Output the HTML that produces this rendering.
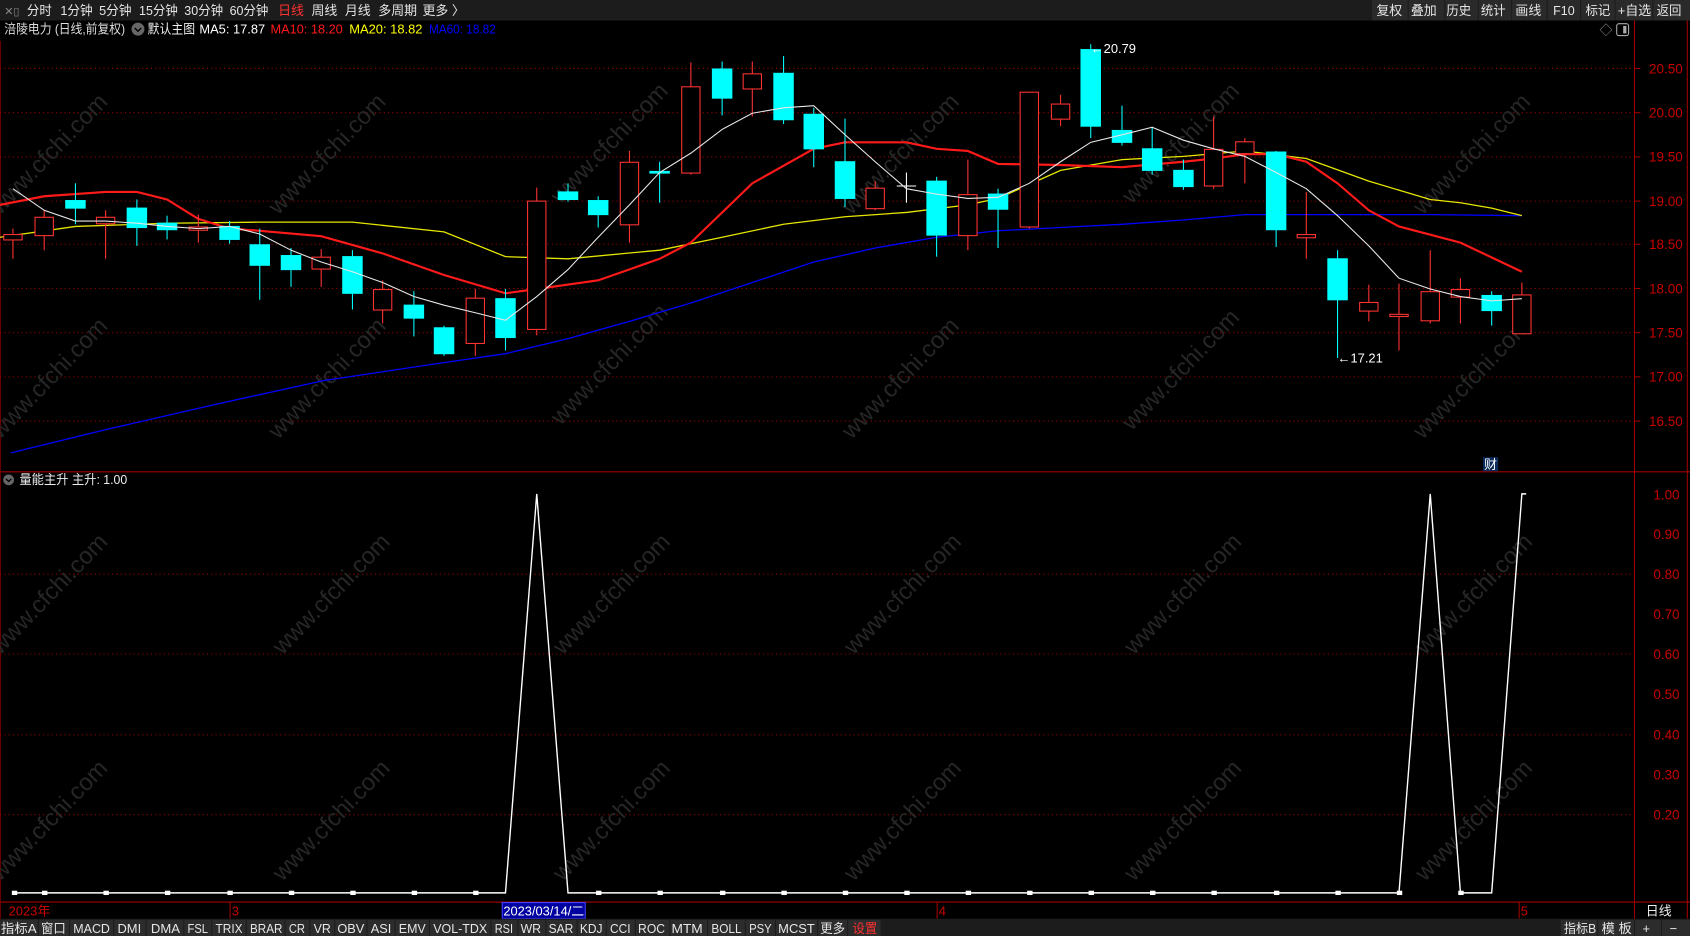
<!DOCTYPE html>
<html><head><meta charset="utf-8"><style>
html,body{margin:0;padding:0;background:#000;overflow:hidden}
svg{display:block}
text{font-family:"Liberation Sans","Noto Sans CJK SC",sans-serif}
</style></head><body>
<svg width="1690" height="936" viewBox="0 0 1568 868" preserveAspectRatio="none" xmlns="http://www.w3.org/2000/svg">
<rect width="1568" height="868" fill="#000"/>
<!-- top toolbar -->
<rect x="0" y="0" width="1568" height="19" fill="#1c1c1c"/>
<g font-size="12" fill="#e6e6e6" lengthAdjust="spacingAndGlyphs">
<text x="4" y="14" fill="#888" font-size="10">✕▯</text>
<text x="25" y="14" textLength="23" lengthAdjust="spacingAndGlyphs">分时</text><text x="56" y="14" textLength="30" lengthAdjust="spacingAndGlyphs">1分钟</text><text x="92" y="14" textLength="30" lengthAdjust="spacingAndGlyphs">5分钟</text><text x="129" y="14" textLength="36" lengthAdjust="spacingAndGlyphs">15分钟</text><text x="171" y="14" textLength="36" lengthAdjust="spacingAndGlyphs">30分钟</text><text x="213" y="14" textLength="36" lengthAdjust="spacingAndGlyphs">60分钟</text>
<text x="258" y="14" fill="#ff3030">日线</text><text x="289" y="14">周线</text><text x="320" y="14">月线</text><text x="351" y="14">多周期</text><text x="392" y="14">更多 〉</text>
</g>
<g fill="#2a2a2a"><rect x="1273" y="0" width="33" height="19"/><rect x="1307" y="0" width="33" height="19"/><rect x="1341" y="0" width="30" height="19"/><rect x="1372" y="0" width="30" height="19"/><rect x="1403" y="0" width="32" height="19"/><rect x="1436" y="0" width="30" height="19"/><rect x="1467" y="0" width="31" height="19"/><rect x="1499" y="0" width="34" height="19"/><rect x="1534" y="0" width="34" height="19"/></g>
<g font-size="12" fill="#e6e6e6">
<text x="1277" y="14" textLength="24" lengthAdjust="spacingAndGlyphs">复权</text>
<text x="1309" y="14" textLength="24" lengthAdjust="spacingAndGlyphs">叠加</text>
<text x="1342" y="14" textLength="23" lengthAdjust="spacingAndGlyphs">历史</text>
<text x="1374" y="14" textLength="23" lengthAdjust="spacingAndGlyphs">统计</text>
<text x="1406" y="14" textLength="24" lengthAdjust="spacingAndGlyphs">画线</text>
<text x="1441" y="14" textLength="20" lengthAdjust="spacingAndGlyphs">F10</text>
<text x="1471" y="14" textLength="23" lengthAdjust="spacingAndGlyphs">标记</text>
<text x="1501" y="14" textLength="31" lengthAdjust="spacingAndGlyphs">+自选</text>
<text x="1537" y="14" textLength="23" lengthAdjust="spacingAndGlyphs">返回</text>
</g>
<!-- title row -->
<g font-size="12">
<text x="4" y="31" fill="#ddd" textLength="112" lengthAdjust="spacingAndGlyphs">涪陵电力 (日线,前复权)</text>
<circle cx="128" cy="27" r="6" fill="#666"/><path d="M125 26 L128 29 L131 26" fill="none" stroke="#000" stroke-width="1.3"/>
<text x="137" y="31" fill="#eee" textLength="44" lengthAdjust="spacingAndGlyphs">默认主图</text>
<text x="185" y="31" fill="#fff" textLength="61" lengthAdjust="spacingAndGlyphs">MA5: 17.87</text>
<text x="251" y="31" fill="#ff1a1a" textLength="67" lengthAdjust="spacingAndGlyphs">MA10: 18.20</text>
<text x="324" y="31" fill="#ffff00" textLength="68" lengthAdjust="spacingAndGlyphs">MA20: 18.82</text>
<text x="398" y="31" fill="#0000ff" textLength="62" lengthAdjust="spacingAndGlyphs">MA60: 18.82</text>
<text x="1484" y="32" fill="#888">◇</text>
<rect x="1500" y="22" width="11" height="11" rx="2" fill="none" stroke="#aaa"/><rect x="1506" y="24" width="3" height="7" fill="#aaa"/>
</g>
<!-- frames -->
<line x1="1516.5" y1="19" x2="1516.5" y2="868" stroke="#a00000"/>
<line x1="1565.5" y1="19" x2="1565.5" y2="852" stroke="#a00000"/>
<line x1="0" y1="437.5" x2="1568" y2="437.5" stroke="#a00000"/>
<line x1="0" y1="836.5" x2="1568" y2="836.5" stroke="#a00000"/>
<line x1="0.5" y1="38" x2="0.5" y2="852" stroke="#600"/>
<!-- price grid -->
<g stroke="#a00000" stroke-dasharray="1,3">
<line x1="0" y1="63.5" x2="1516" y2="63.5"/><line x1="0" y1="104.5" x2="1516" y2="104.5"/><line x1="0" y1="145.5" x2="1516" y2="145.5"/><line x1="0" y1="186.5" x2="1516" y2="186.5"/><line x1="0" y1="226.5" x2="1516" y2="226.5"/><line x1="0" y1="267.5" x2="1516" y2="267.5"/><line x1="0" y1="308.5" x2="1516" y2="308.5"/><line x1="0" y1="349.5" x2="1516" y2="349.5"/><line x1="0" y1="390.5" x2="1516" y2="390.5"/>
<line x1="0" y1="532.5" x2="1516" y2="532.5"/><line x1="0" y1="606.5" x2="1516" y2="606.5"/><line x1="0" y1="681.5" x2="1516" y2="681.5"/><line x1="0" y1="755.5" x2="1516" y2="755.5"/>
</g>
<g fill="#c80000" font-size="12.5">
<text x="1530" y="68">20.50</text><text x="1530" y="109">20.00</text><text x="1530" y="150">19.50</text><text x="1530" y="191">19.00</text><text x="1530" y="231">18.50</text><text x="1530" y="272">18.00</text><text x="1530" y="313">17.50</text><text x="1530" y="354">17.00</text><text x="1530" y="395">16.50</text>
<text x="1534" y="463">1.00</text><text x="1534" y="500">0.90</text><text x="1534" y="537">0.80</text><text x="1534" y="574">0.70</text><text x="1534" y="611">0.60</text><text x="1534" y="648">0.50</text><text x="1534" y="686">0.40</text><text x="1534" y="723">0.30</text><text x="1534" y="760">0.20</text>
</g>
<g stroke="#a00000"><line x1="1516" y1="63.5" x2="1522" y2="63.5"/><line x1="1516" y1="104.5" x2="1522" y2="104.5"/><line x1="1516" y1="145.5" x2="1522" y2="145.5"/><line x1="1516" y1="186.5" x2="1522" y2="186.5"/><line x1="1516" y1="226.5" x2="1522" y2="226.5"/><line x1="1516" y1="267.5" x2="1522" y2="267.5"/><line x1="1516" y1="308.5" x2="1522" y2="308.5"/><line x1="1516" y1="349.5" x2="1522" y2="349.5"/><line x1="1516" y1="390.5" x2="1522" y2="390.5"/></g>
<!-- watermarks -->
<g fill="#262626" font-size="22" font-family="Liberation Sans,sans-serif">
<text transform="translate(0,200) rotate(-46)">www.cfchi.com</text>
<text transform="translate(258,200) rotate(-46)">www.cfchi.com</text>
<text transform="translate(0,408) rotate(-46)">www.cfchi.com</text>
<text transform="translate(258,408) rotate(-46)">www.cfchi.com</text>
<text transform="translate(520,395) rotate(-46)">www.cfchi.com</text>
<text transform="translate(790,408) rotate(-46)">www.cfchi.com</text>
<text transform="translate(1050,400) rotate(-46)">www.cfchi.com</text>
<text transform="translate(1320,408) rotate(-46)">www.cfchi.com</text>
<text transform="translate(520,190) rotate(-46)">www.cfchi.com</text>
<text transform="translate(790,200) rotate(-46)">www.cfchi.com</text>
<text transform="translate(1050,190) rotate(-46)">www.cfchi.com</text>
<text transform="translate(1320,200) rotate(-46)">www.cfchi.com</text>
<text transform="translate(0,608) rotate(-46)">www.cfchi.com</text>
<text transform="translate(262,608) rotate(-46)">www.cfchi.com</text>
<text transform="translate(522,608) rotate(-46)">www.cfchi.com</text>
<text transform="translate(792,608) rotate(-46)">www.cfchi.com</text>
<text transform="translate(1052,608) rotate(-46)">www.cfchi.com</text>
<text transform="translate(1322,608) rotate(-46)">www.cfchi.com</text>
<text transform="translate(0,818) rotate(-46)">www.cfchi.com</text>
<text transform="translate(262,818) rotate(-46)">www.cfchi.com</text>
<text transform="translate(522,818) rotate(-46)">www.cfchi.com</text>
<text transform="translate(792,818) rotate(-46)">www.cfchi.com</text>
<text transform="translate(1052,818) rotate(-46)">www.cfchi.com</text>
<text transform="translate(1322,818) rotate(-46)">www.cfchi.com</text>
</g>
<!-- MA lines -->
<polyline fill="none" stroke="#0000ff" stroke-width="1.2" points="10,420 100,398 200,375 300,353 400,338 469,328 527,314 584,298 641,281 698,262 755,243 812,230 869,220 926,214 984,211 1041,208 1098,204 1155,199 1212,199 1270,199 1327,199 1412,200"/>
<polyline fill="none" stroke="#e6e600" stroke-width="1.2" points="0,220 70,210 155,207 241,206 327,206 412,215 469,238 527,240 612,232 670,220 727,208 784,201 841,197 898,190 926,184 984,158 1041,148 1098,145 1155,140 1212,147 1270,168 1327,185 1355,188 1384,193 1412,200"/>
<polyline fill="none" stroke="#ff1a1a" stroke-width="2" points="0,190 41,182 98,178 127,178 155,185 184,203 213,212 241,214 298,219 355,235 412,255 469,272 498,268 555,260 612,240 641,225 698,170 755,138 784,132 841,132 869,138 898,140 926,152 984,153 1041,155 1098,150 1126,147 1155,143 1184,143 1212,150 1241,170 1270,195 1298,210 1355,225 1412,252"/>
<!-- candles -->
<g stroke-width="1">
<g stroke="#ff3232" fill="#000">
<line x1="12" y1="212" x2="12" y2="240"/><rect x="3.5" y="217.5" width="17" height="5"/>
<line x1="41" y1="195" x2="41" y2="232"/><rect x="32.5" y="201.5" width="17" height="17"/>
<line x1="98" y1="195" x2="98" y2="240"/><rect x="89.5" y="201.5" width="17" height="6"/>
<line x1="184" y1="199" x2="184" y2="225"/><rect x="175.5" y="210.5" width="17" height="3"/>
<line x1="298" y1="231" x2="298" y2="266"/><rect x="289.5" y="238.5" width="17" height="11"/>
<line x1="355" y1="260" x2="355" y2="300"/><rect x="346.5" y="268.5" width="17" height="19"/>
<line x1="441" y1="268" x2="441" y2="330"/><rect x="432.5" y="276.5" width="17" height="42"/>
<line x1="498" y1="174" x2="498" y2="311"/><rect x="489.5" y="186.5" width="17" height="119"/>
<line x1="584" y1="140" x2="584" y2="225"/><rect x="575.5" y="150.5" width="17" height="58"/>
<line x1="641" y1="58" x2="641" y2="162"/><rect x="632.5" y="80.5" width="17" height="80"/>
<line x1="698" y1="57" x2="698" y2="108"/><rect x="689.5" y="68.5" width="17" height="14"/>
<line x1="812" y1="168" x2="812" y2="195"/><rect x="803.5" y="174.5" width="17" height="19"/>
<line x1="898" y1="148" x2="898" y2="232"/><rect x="889.5" y="180.5" width="17" height="38"/>
<line x1="955" y1="85" x2="955" y2="212"/><rect x="946.5" y="85.5" width="17" height="125"/>
<line x1="984" y1="88" x2="984" y2="117"/><rect x="975.5" y="96.5" width="17" height="14"/>
<line x1="1126" y1="108" x2="1126" y2="175"/><rect x="1117.5" y="138.5" width="17" height="34"/>
<line x1="1155" y1="128" x2="1155" y2="170"/><rect x="1146.5" y="131.5" width="17" height="11"/>
<line x1="1212" y1="178" x2="1212" y2="240"/><rect x="1203.5" y="217.5" width="17" height="3"/>
<line x1="1270" y1="264" x2="1270" y2="298"/><rect x="1261.5" y="280.5" width="17" height="8"/>
<line x1="1298" y1="263" x2="1298" y2="325"/><rect x="1289.5" y="291.5" width="17" height="2"/>
<line x1="1327" y1="232" x2="1327" y2="300"/><rect x="1318.5" y="270.5" width="17" height="27"/>
<line x1="1355" y1="258" x2="1355" y2="300"/><rect x="1346.5" y="268.5" width="17" height="7"/>
<line x1="1412" y1="262" x2="1412" y2="310"/><rect x="1403.5" y="273.5" width="17" height="36"/>
</g>
<g stroke="#00ffff" fill="#00ffff">
<line x1="70" y1="170" x2="70" y2="208"/><rect x="61" y="186" width="18" height="7"/>
<line x1="127" y1="185" x2="127" y2="228"/><rect x="118" y="193" width="18" height="18"/>
<line x1="155" y1="200" x2="155" y2="222"/><rect x="146" y="207" width="18" height="6"/>
<line x1="213" y1="205" x2="213" y2="226"/><rect x="204" y="210" width="18" height="12"/>
<line x1="241" y1="212" x2="241" y2="278"/><rect x="232" y="227" width="18" height="19"/>
<line x1="270" y1="230" x2="270" y2="266"/><rect x="261" y="237" width="18" height="13"/>
<line x1="327" y1="232" x2="327" y2="287"/><rect x="318" y="238" width="18" height="34"/>
<line x1="384" y1="270" x2="384" y2="312"/><rect x="375" y="283" width="18" height="12"/>
<line x1="412" y1="302" x2="412" y2="330"/><rect x="403" y="304" width="18" height="24"/>
<line x1="469" y1="268" x2="469" y2="325"/><rect x="460" y="277" width="18" height="36"/>
<line x1="527" y1="170" x2="527" y2="187"/><rect x="518" y="178" width="18" height="7"/>
<line x1="555" y1="182" x2="555" y2="211"/><rect x="546" y="186" width="18" height="13"/>
<line x1="612" y1="150" x2="612" y2="188"/><rect x="603" y="159" width="18" height="1.5"/>
<line x1="670" y1="57" x2="670" y2="107"/><rect x="661" y="64" width="18" height="27"/>
<line x1="727" y1="52" x2="727" y2="115"/><rect x="718" y="68" width="18" height="43"/>
<line x1="755" y1="100" x2="755" y2="155"/><rect x="746" y="106" width="18" height="32"/>
<line x1="784" y1="110" x2="784" y2="192"/><rect x="775" y="150" width="18" height="34"/>
<line x1="869" y1="164" x2="869" y2="238"/><rect x="860" y="168" width="18" height="50"/>
<line x1="926" y1="175" x2="926" y2="230"/><rect x="917" y="180" width="18" height="14"/>
<line x1="1012" y1="41" x2="1012" y2="128"/><rect x="1003" y="46" width="18" height="71"/>
<line x1="1041" y1="98" x2="1041" y2="135"/><rect x="1032" y="121" width="18" height="11"/>
<line x1="1069" y1="118" x2="1069" y2="162"/><rect x="1060" y="138" width="18" height="20"/>
<line x1="1098" y1="148" x2="1098" y2="176"/><rect x="1089" y="158" width="18" height="15"/>
<line x1="1184" y1="140" x2="1184" y2="229"/><rect x="1175" y="141" width="18" height="72"/>
<line x1="1241" y1="232" x2="1241" y2="332"/><rect x="1232" y="240" width="18" height="38"/>
<line x1="1384" y1="270" x2="1384" y2="302"/><rect x="1375" y="274" width="18" height="14"/>
</g>
<g stroke="#fff"><line x1="841" y1="160" x2="841" y2="188"/><line x1="832" y1="172.5" x2="850" y2="172.5"/></g>
</g>
<polyline fill="none" stroke="#e8e8e8" stroke-width="1" points="12,175 41,195 70,205 98,205 127,207 155,210 184,212 213,210 241,217 270,232 298,243 327,252 355,262 384,275 412,283 441,290 469,297 498,275 527,250 555,220 584,190 612,160 641,142 670,120 698,105 727,100 755,98 784,125 812,150 841,175 869,180 898,184 926,183 955,170 984,150 1012,132 1041,125 1069,118 1098,130 1126,138 1155,145 1184,160 1212,175 1241,200 1270,228 1298,258 1327,268 1355,275 1384,279 1412,277"/>
<g fill="#fff" font-size="12"><text x="1012" y="49">←20.79</text><text x="1241" y="336">←17.21</text></g>
<rect x="1376" y="424" width="14" height="13" fill="#0a2a5a"/><text x="1377" y="435" fill="#fff" font-size="12">财</text>
<!-- indicator -->
<circle cx="8" cy="445" r="5" fill="#666"/><path d="M5.5 444 L8 446.5 L10.5 444" fill="none" stroke="#000" stroke-width="1.2"/>
<text x="18" y="449" fill="#eee" font-size="12" textLength="100" lengthAdjust="spacingAndGlyphs">量能主升  主升: 1.00</text>
<polyline fill="none" stroke="#fff" stroke-width="1.3" points="13,828 469,828 498,458 527,828 1298,828 1327,458 1355,828 1384,828 1412,458 1416,458"/>
<g fill="#fff">
<rect x="11" y="826" width="5" height="4"/><rect x="39" y="826" width="5" height="4"/><rect x="96" y="826" width="5" height="4"/><rect x="153" y="826" width="5" height="4"/><rect x="211" y="826" width="5" height="4"/><rect x="268" y="826" width="5" height="4"/><rect x="325" y="826" width="5" height="4"/><rect x="382" y="826" width="5" height="4"/><rect x="439" y="826" width="5" height="4"/><rect x="553" y="826" width="5" height="4"/><rect x="610" y="826" width="5" height="4"/><rect x="668" y="826" width="5" height="4"/><rect x="725" y="826" width="5" height="4"/><rect x="782" y="826" width="5" height="4"/><rect x="839" y="826" width="5" height="4"/><rect x="896" y="826" width="5" height="4"/><rect x="953" y="826" width="5" height="4"/><rect x="1010" y="826" width="5" height="4"/><rect x="1067" y="826" width="5" height="4"/><rect x="1124" y="826" width="5" height="4"/><rect x="1182" y="826" width="5" height="4"/><rect x="1239" y="826" width="5" height="4"/><rect x="1296" y="826" width="5" height="4"/><rect x="1353" y="826" width="5" height="4"/>
</g>
<!-- date axis -->
<g stroke="#a00000"><line x1="213.5" y1="836" x2="213.5" y2="852"/><line x1="869.5" y1="836" x2="869.5" y2="852"/><line x1="1409.5" y1="836" x2="1409.5" y2="852"/></g>
<g fill="#c80000" font-size="12"><text x="8" y="849">2023年</text><text x="215" y="849">3</text><text x="871" y="849">4</text><text x="1411" y="849">5</text></g>
<rect x="466" y="837" width="77" height="15" fill="#0000a0" stroke="#4040ff"/>
<text x="467" y="849" fill="#fff" font-size="12" textLength="75" lengthAdjust="spacingAndGlyphs">2023/03/14/二</text>
<text x="1527" y="849" fill="#eee" font-size="12">日线</text>
<!-- bottom tabs -->
<rect x="0" y="852" width="1568" height="16" fill="#1c1c1c"/>
<g fill="#2c2c2c">
<rect x="0" y="853" width="35" height="15"/><rect x="36" y="853" width="28" height="15"/><rect x="65" y="853" width="40" height="15"/><rect x="106" y="853" width="29" height="15"/><rect x="136" y="853" width="34" height="15"/><rect x="171" y="853" width="25" height="15"/><rect x="197" y="853" width="31" height="15"/><rect x="229" y="853" width="35" height="15"/><rect x="265" y="853" width="22" height="15"/><rect x="288" y="853" width="22" height="15"/><rect x="311" y="853" width="29" height="15"/><rect x="341" y="853" width="25" height="15"/><rect x="367" y="853" width="31" height="15"/><rect x="399" y="853" width="56" height="15"/><rect x="456" y="853" width="24" height="15"/><rect x="481" y="853" width="25" height="15"/><rect x="507" y="853" width="28" height="15"/><rect x="536" y="853" width="26" height="15"/><rect x="563" y="853" width="26" height="15"/><rect x="590" y="853" width="31" height="15"/><rect x="622" y="853" width="34" height="15"/><rect x="657" y="853" width="34" height="15"/><rect x="692" y="853" width="27" height="15"/><rect x="720" y="853" width="38" height="15"/><rect x="759" y="853" width="27" height="15"/><rect x="787" y="853" width="30" height="15"/>
<rect x="1448" y="853" width="34" height="15"/><rect x="1483" y="853" width="33" height="15"/><rect x="1517" y="853" width="24" height="15"/><rect x="1542" y="853" width="26" height="15"/>
</g>
<g fill="#e6e6e6" font-size="12">
<text x="1" y="865" textLength="33" lengthAdjust="spacingAndGlyphs">指标A</text>
<text x="38" y="865" textLength="23" lengthAdjust="spacingAndGlyphs">窗口</text>
<text x="68" y="865" textLength="34" lengthAdjust="spacingAndGlyphs">MACD</text>
<text x="109" y="865" textLength="22" lengthAdjust="spacingAndGlyphs">DMI</text>
<text x="140" y="865" textLength="27" lengthAdjust="spacingAndGlyphs">DMA</text>
<text x="174" y="865" textLength="19" lengthAdjust="spacingAndGlyphs">FSL</text>
<text x="200" y="865" textLength="25" lengthAdjust="spacingAndGlyphs">TRIX</text>
<text x="232" y="865" textLength="30" lengthAdjust="spacingAndGlyphs">BRAR</text>
<text x="268" y="865" textLength="15" lengthAdjust="spacingAndGlyphs">CR</text>
<text x="291" y="865" textLength="16" lengthAdjust="spacingAndGlyphs">VR</text>
<text x="313" y="865" textLength="25" lengthAdjust="spacingAndGlyphs">OBV</text>
<text x="344" y="865" textLength="19" lengthAdjust="spacingAndGlyphs">ASI</text>
<text x="370" y="865" textLength="25" lengthAdjust="spacingAndGlyphs">EMV</text>
<text x="402" y="865" textLength="50" lengthAdjust="spacingAndGlyphs">VOL-TDX</text>
<text x="459" y="865" textLength="17" lengthAdjust="spacingAndGlyphs">RSI</text>
<text x="483" y="865" textLength="19" lengthAdjust="spacingAndGlyphs">WR</text>
<text x="509" y="865" textLength="23" lengthAdjust="spacingAndGlyphs">SAR</text>
<text x="538" y="865" textLength="21" lengthAdjust="spacingAndGlyphs">KDJ</text>
<text x="566" y="865" textLength="19" lengthAdjust="spacingAndGlyphs">CCI</text>
<text x="592" y="865" textLength="25" lengthAdjust="spacingAndGlyphs">ROC</text>
<text x="623" y="865" textLength="29" lengthAdjust="spacingAndGlyphs">MTM</text>
<text x="660" y="865" textLength="28" lengthAdjust="spacingAndGlyphs">BOLL</text>
<text x="695" y="865" textLength="21" lengthAdjust="spacingAndGlyphs">PSY</text>
<text x="722" y="865" textLength="34" lengthAdjust="spacingAndGlyphs">MCST</text>
<text x="761" y="865" textLength="23" lengthAdjust="spacingAndGlyphs">更多</text>
<text x="791" y="865" fill="#ff3030" textLength="23" lengthAdjust="spacingAndGlyphs">设置</text>
<text x="1451" y="865" textLength="30" lengthAdjust="spacingAndGlyphs">指标B</text>
<text x="1486" y="865" textLength="28" lengthAdjust="spacingAndGlyphs">模 板</text>
<text x="1524" y="865">+</text><text x="1549" y="865">−</text>
</g>
</svg>
</body></html>
